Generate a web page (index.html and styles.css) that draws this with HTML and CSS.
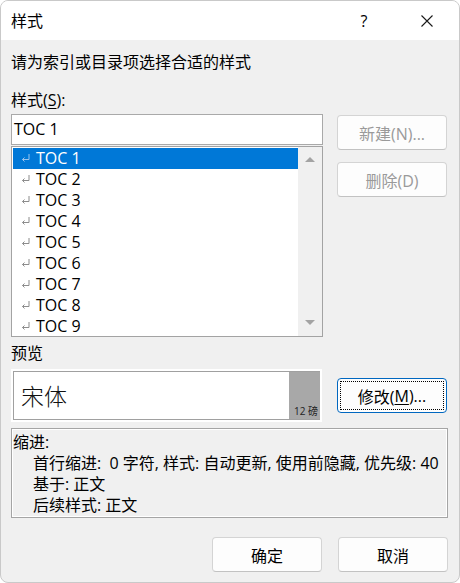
FILE: index.html
```html
<!DOCTYPE html>
<html lang="zh-CN">
<head>
<meta charset="utf-8">
<title>样式</title>
<link rel="stylesheet" href="styles.css">
</head>
<body>
<div class="window">
  <div class="titlebar">
    <span class="title">样式</span>
    <span class="help">?</span>
    <span class="close">
      <svg width="12" height="12" viewBox="0 0 12 12"><path d="M0.5 0.5 L11.5 11.5 M11.5 0.5 L0.5 11.5" stroke="#1a1a1a" stroke-width="1.1" fill="none"/></svg>
    </span>
  </div>
  <div class="content">
    <p class="intro">请为索引或目录项选择合适的样式</p>
    <div class="label">样式(<u>S</u>):</div>
    <div class="style-row">
      <div class="style-col">
        <div class="input">TOC 1</div>
        <div class="list">
          <ul class="items">
            <li class="item selected"><svg class="ret" width="9" height="8" viewBox="0 0 9 8"><path d="M8 0 V5.5 H1.5 M3.5 3.5 L1.5 5.5 L3.5 7.5" fill="none" stroke-width="1"/></svg>TOC 1</li>
            <li class="item"><svg class="ret" width="9" height="8" viewBox="0 0 9 8"><path d="M8 0 V5.5 H1.5 M3.5 3.5 L1.5 5.5 L3.5 7.5" fill="none" stroke-width="1"/></svg>TOC 2</li>
            <li class="item"><svg class="ret" width="9" height="8" viewBox="0 0 9 8"><path d="M8 0 V5.5 H1.5 M3.5 3.5 L1.5 5.5 L3.5 7.5" fill="none" stroke-width="1"/></svg>TOC 3</li>
            <li class="item"><svg class="ret" width="9" height="8" viewBox="0 0 9 8"><path d="M8 0 V5.5 H1.5 M3.5 3.5 L1.5 5.5 L3.5 7.5" fill="none" stroke-width="1"/></svg>TOC 4</li>
            <li class="item"><svg class="ret" width="9" height="8" viewBox="0 0 9 8"><path d="M8 0 V5.5 H1.5 M3.5 3.5 L1.5 5.5 L3.5 7.5" fill="none" stroke-width="1"/></svg>TOC 5</li>
            <li class="item"><svg class="ret" width="9" height="8" viewBox="0 0 9 8"><path d="M8 0 V5.5 H1.5 M3.5 3.5 L1.5 5.5 L3.5 7.5" fill="none" stroke-width="1"/></svg>TOC 6</li>
            <li class="item"><svg class="ret" width="9" height="8" viewBox="0 0 9 8"><path d="M8 0 V5.5 H1.5 M3.5 3.5 L1.5 5.5 L3.5 7.5" fill="none" stroke-width="1"/></svg>TOC 7</li>
            <li class="item"><svg class="ret" width="9" height="8" viewBox="0 0 9 8"><path d="M8 0 V5.5 H1.5 M3.5 3.5 L1.5 5.5 L3.5 7.5" fill="none" stroke-width="1"/></svg>TOC 8</li>
            <li class="item"><svg class="ret" width="9" height="8" viewBox="0 0 9 8"><path d="M8 0 V5.5 H1.5 M3.5 3.5 L1.5 5.5 L3.5 7.5" fill="none" stroke-width="1"/></svg>TOC 9</li>
          </ul>
          <div class="scrollbar">
            <span class="arrow-up"></span>
            <span class="arrow-down"></span>
          </div>
        </div>
      </div>
      <div class="side-buttons">
        <button class="btn" disabled>新建(N)...</button>
        <button class="btn" disabled>删除(D)</button>
      </div>
    </div>
    <div class="label preview-label">预览</div>
    <div class="preview-row">
      <div class="preview">
        <div class="preview-inner">
          <div class="preview-text">宋体</div>
          <div class="preview-size">12 磅</div>
        </div>
      </div>
      <button class="btn focused"><span class="focus-ring">修改(<u>M</u>)...</span></button>
    </div>
    <div class="desc">
      <div class="desc-line">缩进:</div>
      <div class="desc-line sub">首行缩进:&nbsp; 0 字符, 样式: 自动更新, 使用前隐藏, 优先级: 40</div>
      <div class="desc-line sub">基于: 正文</div>
      <div class="desc-line sub">后续样式: 正文</div>
    </div>
    <div class="footer">
      <button class="btn">确定</button>
      <button class="btn">取消</button>
    </div>
  </div>
</div>
</body>
</html>
```

FILE: styles.css
```css
* { box-sizing: border-box; }
html, body { margin: 0; padding: 0; background: #ffffff; }
body {
  font-family: "Open Sans", "Noto Sans CJK SC", sans-serif;
  font-size: 16px;
  color: #000;
}
.window {
  width: 460px;
  height: 583px;
  border: 1px solid #c9c9c9;
  border-radius: 8px;
  overflow: hidden;
  background: #f0f0f0;
}
.titlebar {
  height: 39px;
  background: #ffffff;
  display: flex;
  align-items: center;
  padding-left: 10px;
}
.title { flex: 1; line-height: 22px; }
.help {
  width: 10px;
  text-align: center;
  margin-right: 52px;
  line-height: 22px;
}
.close {
  width: 12px;
  height: 12px;
  margin-right: 26px;
  display: flex;
}
.content {
  padding: 0 11px 0 10px;
}
.intro {
  margin: 0;
  padding-top: 11px;
  line-height: 22px;
}
.label {
  margin-top: 16px;
  line-height: 22px;
}
.label u { text-underline-offset: 2px; }
.style-row {
  display: flex;
  gap: 14px;
  margin-top: 3px;
}
.style-col { width: 312px; }
.input {
  height: 31px;
  border: 1px solid #a9a9a9;
  background: #fff;
  padding-left: 2px;
  line-height: 29px;
}
.list {
  margin-top: 1px;
  height: 191px;
  border: 1px solid #a3a3a3;
  background: #fff;
  display: flex;
  overflow: hidden;
}
.items {
  list-style: none;
  margin: 0;
  padding: 1px 0 0 1px;
  flex: 1;
  overflow: hidden;
}
.item {
  height: 21px;
  line-height: 21px;
  display: flex;
  align-items: flex-start;
  padding-left: 8px;
  color: #000;
}
.item .ret {
  margin-top: 6px;
  margin-right: 6px;
  flex: none;
  stroke: #8c8c8c;
}
.item.selected {
  background: #0078d7;
  color: #fff;
}
.item.selected .ret { stroke: #9cc4ec; }
.scrollbar {
  width: 24px;
  background: #f0f0f0;
  display: flex;
  flex-direction: column;
  align-items: center;
  justify-content: space-between;
  padding: 10px 0 11px;
}
.arrow-up, .arrow-down {
  width: 0;
  height: 0;
  border-left: 5px solid transparent;
  border-right: 5px solid transparent;
}
.arrow-up { border-bottom: 5px solid #a3a3a3; }
.arrow-down { border-top: 5px solid #a3a3a3; }
.side-buttons {
  display: flex;
  flex-direction: column;
  gap: 12px;
  padding-top: 1px;
}
.btn {
  width: 110px;
  height: 35px;
  background: #fdfdfd;
  border: 1px solid #d4d4d4;
  border-bottom-color: #c2c2c2;
  border-radius: 4px;
  font-family: "Open Sans", "Noto Sans CJK SC", sans-serif;
  font-size: 16px;
  color: #000;
  padding: 0;
}
.btn:disabled { color: #9a9a9a; }
.preview-label { margin-top: 5px; }
.preview-row {
  display: flex;
  align-items: center;
  gap: 15px;
  margin-top: 5px;
}
.preview {
  width: 311px;
  height: 53px;
  background: #fff;
  padding: 2px;
}
.preview-inner {
  height: 100%;
  border: 1px solid #a0a0a0;
  border-right: none;
  display: flex;
}
.preview-text {
  flex: 1;
  font-family: "Noto Sans CJK SC", sans-serif;
  font-weight: 300;
  font-size: 23px;
  line-height: 46px;
  padding-left: 7px;
  color: #111;
}
.preview-size {
  width: 31px;
  background: #a8a8a8;
  font-size: 10px;
  line-height: 12px;
  display: flex;
  align-items: flex-end;
  padding: 0 0 2px 5px;
  color: #222;
}
.btn.focused {
  border: 1px solid #0067c0;
  padding: 2px;
  display: flex;
}
.focus-ring {
  flex: 1;
  border: 1px dotted #000;
  display: flex;
  align-items: center;
  justify-content: center;
}
.focus-ring u { text-underline-offset: 2px; }
.desc {
  margin-top: 6px;
  height: 90px;
  border: 1px solid #a5a5a5;
  box-shadow: inset 0 0 0 1px #ffffff;
  padding: 3px 0 0 1px;
}
.desc-line { line-height: 21px; }
.desc-line.sub { padding-left: 20px; }
.footer {
  margin-top: 19px;
  display: flex;
  justify-content: flex-end;
  gap: 16px;
  padding-right: 0;
}
```
